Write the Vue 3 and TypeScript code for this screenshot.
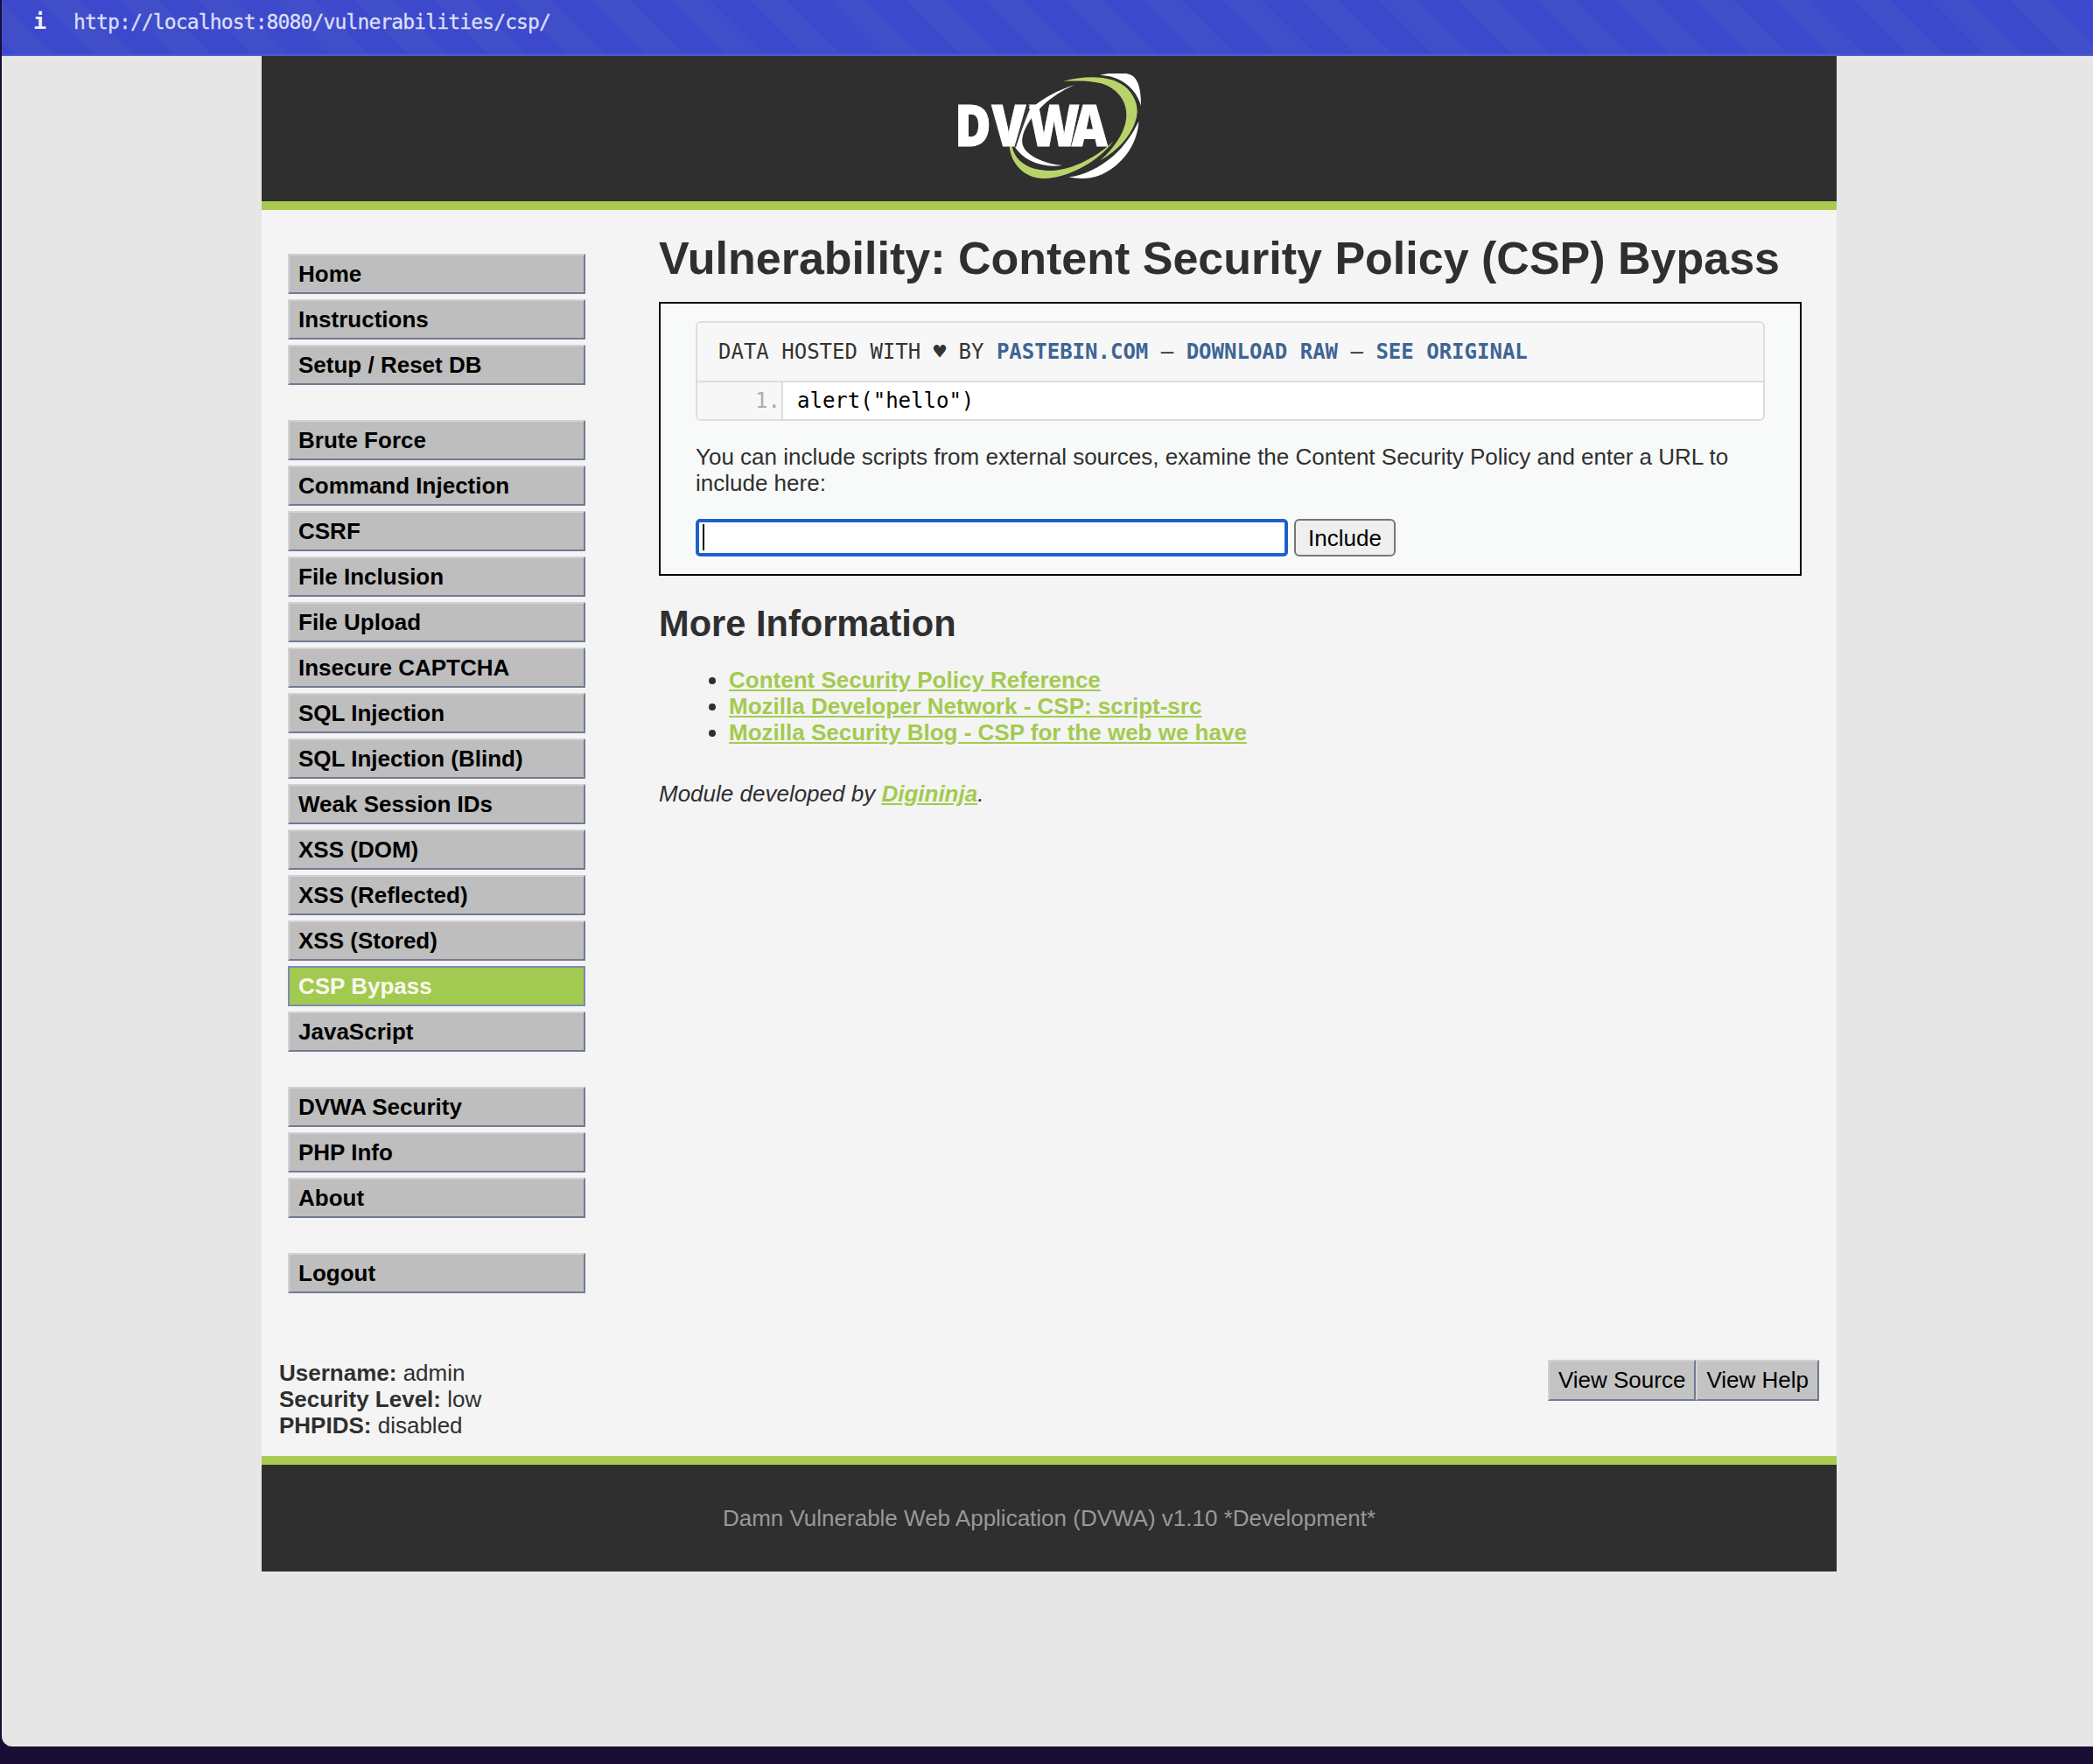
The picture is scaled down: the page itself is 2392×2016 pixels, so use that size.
<script setup lang="ts">
interface MenuItem {
  label: string
  active?: boolean
}

const menuGroups: MenuItem[][] = [
  [{ label: 'Home' }, { label: 'Instructions' }, { label: 'Setup / Reset DB' }],
  [
    { label: 'Brute Force' },
    { label: 'Command Injection' },
    { label: 'CSRF' },
    { label: 'File Inclusion' },
    { label: 'File Upload' },
    { label: 'Insecure CAPTCHA' },
    { label: 'SQL Injection' },
    { label: 'SQL Injection (Blind)' },
    { label: 'Weak Session IDs' },
    { label: 'XSS (DOM)' },
    { label: 'XSS (Reflected)' },
    { label: 'XSS (Stored)' },
    { label: 'CSP Bypass', active: true },
    { label: 'JavaScript' },
  ],
  [{ label: 'DVWA Security' }, { label: 'PHP Info' }, { label: 'About' }],
  [{ label: 'Logout' }],
]

const references: string[] = [
  'Content Security Policy Reference',
  'Mozilla Developer Network - CSP: script-src',
  'Mozilla Security Blog - CSP for the web we have',
]

const status: { name: string; value: string }[] = [
  { name: 'Username:', value: 'admin' },
  { name: 'Security Level:', value: 'low' },
  { name: 'PHPIDS:', value: 'disabled' },
]
</script>

<template>
  <div class="desktop">
    <div class="window">
      <div class="urlbar">
        <span class="info">i</span>
        <span class="url">http://localhost:8080/vulnerabilities/csp/</span>
      </div>

      <div class="container">
        <header class="header">
          <svg class="logo" viewBox="57 72 645 360" width="215" height="120">
            <path fill="#fff" d="M562 77C600 69 645 66 670 78C694 92 702 130 702 182C690 140 660 108 625 92C603 82 585 79 562 77Z" />
            <path fill="#b9d36b" d="M436 98C500 80 570 80 615 98C668 120 690 165 689 205C685 265 635 330 562 370C612 325 652 270 652 213C652 165 620 122 565 106C525 95 480 97 436 98Z" />
            <path fill="#fff" d="M694 236C690 325 625 397 555 423C525 434 485 434 455 427C520 421 600 372 642 318C666 290 681 262 694 236Z" />
            <path fill="#b9d36b" d="M251 322C256 380 300 432 370 432C450 432 560 372 607 304C560 350 470 406 385 405C320 404 270 375 260 322Z" />
            <path fill="#fff" d="M474 111C420 128 355 160 318 200L270 325C300 370 360 397 432 387C370 382 300 352 295 310C292 265 330 215 365 182C395 155 430 130 474 111Z" />
            <text class="logo-text" transform="scale(0.86 1)" x="74 221 367 539.5" y="320">DVWA</text>
            <path d="M318 180L271 323" stroke="#3a3d42" stroke-width="5" />
          </svg>
        </header>

        <div class="body">
          <nav class="menu">
            <ul v-for="(group, g) in menuGroups" :key="g">
              <li v-for="item in group" :key="item.label" :class="{ selected: item.active }">{{ item.label }}</li>
            </ul>
          </nav>

          <main class="main">
            <h1>Vulnerability: Content Security Policy (CSP) Bypass</h1>
            <section class="vulnerable">
              <div class="paste">
                <div class="paste-head">
                  data hosted with ♥ by <b>pastebin.com</b> – <b>download raw</b> – <b>see original</b>
                </div>
                <div class="paste-line">
                  <span class="num">1.</span>
                  <code>alert("hello")</code>
                </div>
              </div>
              <p>
                You can include scripts from external sources, examine the Content Security Policy and enter a URL to
                include here:
              </p>
              <form @submit.prevent>
                <div class="field"><span class="caret"></span></div>
                <button type="submit">Include</button>
              </form>
            </section>

            <h2>More Information</h2>
            <ul class="refs">
              <li v-for="r in references" :key="r"><a>{{ r }}</a></li>
            </ul>
            <div class="credit">Module developed by <a>Digininja</a>.</div>
          </main>
        </div>

        <div class="system">
          <div>
            <div v-for="s in status" :key="s.name"><b>{{ s.name }}</b> {{ s.value }}</div>
          </div>
          <div class="views">
            <span>View Source</span>
            <span>View Help</span>
          </div>
        </div>

        <footer class="footer">Damn Vulnerable Web Application (DVWA) v1.10 *Development*</footer>
      </div>
    </div>
  </div>
</template>

<style>
body {
  background: #190d33;
}
</style>

<style scoped>
.desktop {
  height: 2016px;
  box-sizing: border-box;
  padding: 0 0 20px 2px;
  background: #190d33;
  overflow: hidden;
  font: 26px/30px 'Liberation Sans', Arial, sans-serif;
  color: #2f2f2f;
}
.window {
  height: 1996px;
  background: #e6e6e6;
  border-bottom-left-radius: 12px;
  overflow: hidden;
}
.urlbar {
  height: 64px;
  box-sizing: border-box;
  border-bottom: 2px solid #4f5bd0;
  background: repeating-linear-gradient(
    45deg,
    #3c49cc 0,
    #3c49cc 11.1px,
    #404eca 11.1px,
    #404eca 41.8px,
    #3c49cc 41.8px,
    #3c49cc 63.68px
  );
  display: flex;
  padding: 9px 0 0 36px;
  font: 23px/32px 'DejaVu Sans Mono', monospace;
  color: #dcdff7;
}
.info {
  width: 46px;
  font-weight: bold;
  font-size: 25px;
  color: #f0f1fc;
}
.url {
  letter-spacing: -0.87px;
  -webkit-text-stroke: 0.3px #dcdff7;
}
.container {
  width: 1800px;
  margin-left: 297px;
  background: #f4f4f4;
}
.header {
  height: 176px;
  box-sizing: border-box;
  border-bottom: 10px solid #a9cb51;
  background: #2f2f2f;
  padding: 20px 0 0 790px;
}
.logo {
  display: block;
}
.logo-text {
  font: 800 197px 'Open Sans', 'Noto Sans', sans-serif;
  fill: #fff;
  stroke: #fff;
  stroke-width: 3px;
}
.body {
  display: flex;
  height: 1314px;
}
.menu {
  width: 340px;
  padding: 50px 84px 0 30px;
}
.menu ul {
  list-style: none;
  margin: 0 0 40px;
  padding: 0;
}
.menu li {
  box-sizing: border-box;
  height: 46px;
  margin-bottom: 6px;
  padding: 6px 10px;
  border: 2px solid;
  border-color: #d2d2d2 #6f7b91 #6f7b91 #d2d2d2;
  background: #bebebe;
  color: #000;
  font-weight: bold;
}
.menu li.selected {
  background: #a3ca50;
  border-color: #7a8cb3;
  color: #faf8ec;
}
.main {
  width: 1306px;
}
h1 {
  margin: 25px 0 20px;
  font-size: 52px;
  line-height: 60px;
  white-space: nowrap;
}
.vulnerable {
  box-sizing: border-box;
  height: 313px;
  border: 2px solid #000;
  background: #f8faf9;
  padding: 20px 40px;
}
.paste {
  box-sizing: border-box;
  height: 114px;
  border: 2px solid #ddd;
  border-radius: 6px;
  background: #fff;
  overflow: hidden;
  font: 24px/28px 'DejaVu Sans Mono', monospace;
  color: #333;
}
.paste-head {
  height: 66px;
  border-bottom: 2px solid #ddd;
  background: #f7f7f7;
  padding-left: 24px;
  line-height: 66px;
  text-transform: uppercase;
  white-space: nowrap;
}
.paste-head b {
  color: #3e6594;
}
.paste-line {
  display: flex;
  height: 42px;
  line-height: 43px;
}
.num {
  width: 95px;
  padding-right: 1px;
  border-right: 2px solid #ddd;
  background: #f7f7f7;
  color: #acacac;
  text-align: right;
}
code {
  padding-left: 16px;
  font: inherit;
  color: #000;
}
.vulnerable p {
  margin: 26px 0;
}
form {
  display: flex;
  gap: 7px;
}
.field {
  box-sizing: border-box;
  width: 677px;
  height: 43px;
  border: 4px solid #2260c9;
  border-radius: 5px;
  box-shadow: 0 0 0 2px #fff;
  background: #fff;
  padding: 2px 4px;
}
.caret {
  display: block;
  width: 2px;
  height: 30px;
  background: #000;
}
button {
  width: 116px;
  height: 43px;
  border: 2px solid #767676;
  border-radius: 6px;
  background: #efefef;
  padding: 0;
  font: 26px/30px 'Liberation Sans', Arial, sans-serif;
  color: #000;
}
h2 {
  margin: 32px 0 26px;
  font-size: 41.6px;
  line-height: 46px;
}
.refs {
  margin: 0 0 40px;
  padding-left: 80px;
}
a {
  color: #a3ca50;
  font-weight: bold;
  text-decoration: underline;
}
.credit {
  font-style: italic;
}
.system {
  display: flex;
  justify-content: space-between;
  height: 110px;
  padding: 0 20px;
}
.views {
  display: flex;
  height: 47px;
}
.views span {
  box-sizing: border-box;
  border: 2px solid;
  border-color: #d2d2d2 #6f7b91 #6f7b91 #d2d2d2;
  background: #c3c3c3;
  color: #000;
  padding: 6px 10px;
}
.footer {
  box-sizing: border-box;
  height: 132px;
  border-top: 10px solid #a9cb51;
  background: #2f2f2f;
  color: #999;
  text-align: center;
  padding-top: 46px;
}
</style>
